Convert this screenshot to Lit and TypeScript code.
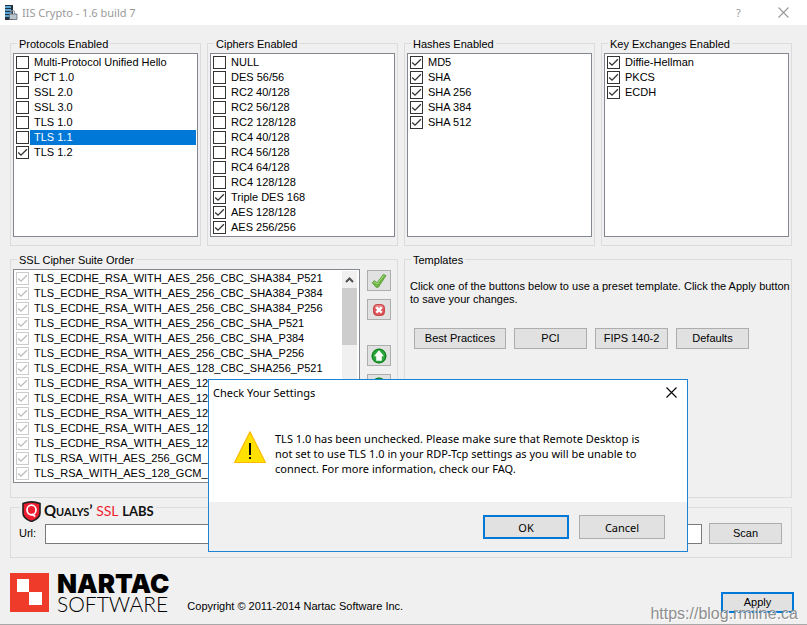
import { LitElement, html, css, svg } from 'lit';
import { customElement, property, state } from 'lit/decorators.js';
import { classMap } from 'lit/directives/class-map.js';

interface Item {
  label: string;
  checked: boolean;
  selected?: boolean;
}

const items = (labels: string[], checked: boolean): Item[] =>
  labels.map((label) => ({ label, checked }));

const PROTOCOLS: Item[] = [
  ...items(['Multi-Protocol Unified Hello', 'PCT 1.0', 'SSL 2.0', 'SSL 3.0', 'TLS 1.0'], false),
  { label: 'TLS 1.1', checked: false, selected: true },
  { label: 'TLS 1.2', checked: true },
];

const CIPHERS: Item[] = [
  ...items(
    [
      'NULL',
      'DES 56/56',
      'RC2 40/128',
      'RC2 56/128',
      'RC2 128/128',
      'RC4 40/128',
      'RC4 56/128',
      'RC4 64/128',
      'RC4 128/128',
    ],
    false,
  ),
  ...items(['Triple DES 168', 'AES 128/128', 'AES 256/256'], true),
];

const HASHES = items(['MD5', 'SHA', 'SHA 256', 'SHA 384', 'SHA 512'], true);
const KEY_EXCHANGES = items(['Diffie-Hellman', 'PKCS', 'ECDH'], true);

const SUITES = items(
  [
    'TLS_ECDHE_RSA_WITH_AES_256_CBC_SHA384_P521',
    'TLS_ECDHE_RSA_WITH_AES_256_CBC_SHA384_P384',
    'TLS_ECDHE_RSA_WITH_AES_256_CBC_SHA384_P256',
    'TLS_ECDHE_RSA_WITH_AES_256_CBC_SHA_P521',
    'TLS_ECDHE_RSA_WITH_AES_256_CBC_SHA_P384',
    'TLS_ECDHE_RSA_WITH_AES_256_CBC_SHA_P256',
    'TLS_ECDHE_RSA_WITH_AES_128_CBC_SHA256_P521',
    'TLS_ECDHE_RSA_WITH_AES_128_CBC_SHA256_P384',
    'TLS_ECDHE_RSA_WITH_AES_128_CBC_SHA256_P256',
    'TLS_ECDHE_RSA_WITH_AES_128_CBC_SHA_P521',
    'TLS_ECDHE_RSA_WITH_AES_128_CBC_SHA_P384',
    'TLS_ECDHE_RSA_WITH_AES_128_CBC_SHA_P256',
    'TLS_RSA_WITH_AES_256_GCM_SHA384',
    'TLS_RSA_WITH_AES_128_GCM_SHA256',
  ],
  true,
);

const TEMPLATES = ['Best Practices', 'PCI', 'FIPS 140-2', 'Defaults'];

const buttonStyles = css`
  button {
    box-sizing: border-box;
    height: 21px;
    min-width: 73px;
    padding: 0 4px;
    border: 1px solid #adadad;
    border-radius: 0;
    background: #e1e1e1;
    color: #000;
    font: inherit;
    white-space: nowrap;
  }
  button.default {
    border: 2px solid #0078d7;
  }
`;

@customElement('check-list')
export class CheckList extends LitElement {
  @property({ attribute: false }) items: Item[] = [];
  @property({ type: Boolean }) disabled = false;

  static styles = css`
    :host {
      display: block;
      min-width: 0;
    }
    ul {
      margin: 0;
      padding: 1px;
      list-style: none;
    }
    label {
      display: flex;
      height: 15px;
      line-height: 15px;
    }
    .box {
      display: grid;
      flex: none;
      width: 13px;
      height: 13px;
      margin: 1px;
      color: #333;
    }
    .box > * {
      grid-area: 1 / 1;
    }
    input {
      appearance: none;
      box-sizing: border-box;
      width: 13px;
      height: 13px;
      margin: 0;
      border: 1px solid #333;
      border-radius: 0;
      background: #fff;
    }
    input:disabled {
      border-color: #ccc;
    }
    .box.off {
      color: #bbb;
    }
    svg {
      pointer-events: none;
      visibility: hidden;
    }
    input:checked + svg {
      visibility: visible;
    }
    .text {
      flex: 1;
      min-width: 0;
      padding-left: 4px;
      white-space: nowrap;
      overflow: hidden;
    }
    .selected {
      background: #0078d7;
      color: #fff;
    }
  `;

  render() {
    return html`<ul>
      ${this.items.map(
        (item) => html`<li>
          <label>
            <span class=${classMap({ box: true, off: this.disabled })}>
              <input type="checkbox" .checked=${item.checked} ?disabled=${this.disabled} />
              <svg width="13" height="13" viewBox="0 0 13 13" aria-hidden="true">
                <path d="M2.2 6.5 5 9.2 10.9 3.3" fill="none" stroke="currentColor" stroke-width="1.3" />
              </svg>
            </span>
            <span class=${classMap({ text: true, selected: !!item.selected })}>${item.label}</span>
          </label>
        </li>`,
      )}
    </ul>`;
  }
}

@customElement('message-dialog')
export class MessageDialog extends LitElement {
  static styles = [
    buttonStyles,
    css`
      :host {
        display: block;
        box-sizing: border-box;
        border: 1px solid #1883d7;
        background: #fff;
        font: 11px/15px 'Noto Sans', 'Open Sans', sans-serif;
      }
      header {
        display: flex;
        justify-content: space-between;
        align-items: center;
        height: 25px;
        padding: 0 9px 0 4px;
      }
      h2 {
        margin: 0;
        font: inherit;
      }
      button.close {
        display: grid;
        min-width: 0;
        height: 13px;
        padding: 0;
        border: 0;
        background: none;
      }
      .body {
        display: flex;
        gap: 9px;
        padding: 26px 25px;
      }
      .body svg {
        flex: none;
      }
      p {
        margin: 0;
        white-space: nowrap;
      }
      footer {
        display: flex;
        justify-content: flex-end;
        gap: 10px;
        padding: 13px 22px 12px;
        background: #f0f0f0;
      }
      footer button {
        width: 86px;
        height: 24px;
      }
    `,
  ];

  render() {
    return html`
      <header>
        <h2>Check Your Settings</h2>
        <button class="close" aria-label="Close">
          <svg width="13" height="13" viewBox="0 0 13 13">
            <path d="M1.5 1.5 11.5 11.5M11.5 1.5 1.5 11.5" stroke="#000" stroke-width="1.1" />
          </svg>
        </button>
      </header>
      <div class="body">
        <svg width="32" height="32" viewBox="0 0 32 32" aria-hidden="true">
          <path d="M16 .8 31.4 31.5H.6Z" fill="#ffe100" stroke="#fdb900" stroke-width="1.2" stroke-linejoin="round" />
          <path d="M15 12h2v12h-2zM15 26h2v2h-2z" fill="#000" />
        </svg>
        <p>
          TLS 1.0 has been unchecked. Please make sure that Remote Desktop is<br />
          not set to use TLS 1.0 in your RDP-Tcp settings as you will be unable to<br />
          connect. For more information, check our FAQ.
        </p>
      </div>
      <footer>
        <button class="default">OK</button>
        <button>Cancel</button>
      </footer>
    `;
  }
}

const upArrow = svg`
  <circle cx="8" cy="8" r="7.5" fill="#2ca53a" />
  <circle cx="8" cy="8" r="6.8" fill="none" stroke="#0c7d1c" />
  <path d="M8 2.2 13 8.2h-2.2v4.600H5.200V8.2H3Z" fill="#fff" />`;

const TOOL_ICONS = [
  {
    name: 'Enable all',
    gap: false,
    art: svg`<path d="M1.200 9.800 3.400 7.600 6 9.800 12.400 1.400 15 2.600 7.400 14.200 5.400 14.600Z" fill="#6db544" stroke="#57993a" stroke-width=".8" />
      <path d="M2.600 9.800 3.500 8.800 6 11 13 2.400" fill="none" stroke="#a8dc7c" stroke-width="1" />`,
  },
  {
    name: 'Disable all',
    gap: false,
    art: svg`<rect x="2.500" y="2.500" width="11" height="11" rx="3.500" fill="#dd5558" stroke="#c23338" stroke-width=".8" />
      <path d="M3.500 6q0-2.500 2.500-2.800h4q2.500.3 2.500 2.800-4.500 2-9 0Z" fill="#f2a0a0" opacity=".7" />
      <path d="M5.300 5.300l5.400 5.400M10.700 5.300l-5.400 5.400" stroke="#fff" stroke-width="2.400" />`,
  },
  { name: 'Move up', gap: true, art: upArrow },
  {
    name: 'Move down',
    gap: false,
    art: svg`<g transform="rotate(180 8 8)">${upArrow}</g>`,
  },
];

@customElement('app-root')
export class AppRoot extends LitElement {
  @state() private url = '';

  static styles = [
    buttonStyles,
    css`
      :host {
        position: relative;
        display: flex;
        flex-direction: column;
        box-sizing: border-box;
        min-height: 100vh;
        border-bottom: 1px solid #a8a8a8;
        background: #f0f0f0;
        color: #000;
        font: 11px/13px 'Liberation Sans', Arial, sans-serif;
      }
      .titlebar {
        display: flex;
        align-items: center;
        gap: 4px;
        height: 25px;
        padding: 0 16px 0 4px;
        background: #fff;
        color: #999;
        font: 11px/16px 'Noto Sans', 'Open Sans', sans-serif;
      }
      h1 {
        flex: 1;
        margin: 0;
        font: inherit;
      }
      .titlebar button {
        display: grid;
        place-items: center;
        min-width: 0;
        width: 15px;
        padding: 0;
        border: 0;
        background: none;
        color: inherit;
      }
      .titlebar button + button {
        margin-left: 26px;
      }
      main {
        display: grid;
        grid-template-columns: repeat(4, minmax(0, 1fr));
        gap: 7px 6px;
        padding: 12px 15px 0 10px;
      }
      .wide {
        grid-column: span 2;
      }
      .full {
        grid-column: 1 / -1;
      }
      fieldset {
        min-width: 0;
        margin: 0;
        padding: 3px 2px 8px;
        border: 1px solid #dcdcdc;
      }
      legend {
        height: 13px;
        margin-left: 4px;
        padding: 0 2px;
        line-height: 15px;
      }
      .list {
        box-sizing: border-box;
        border: 1px solid #828790;
        background: #fff;
      }
      .short {
        min-height: 184px;
      }
      .suites {
        display: flex;
        gap: 7px;
        padding-right: 4px;
        padding-bottom: 6px;
      }
      .suites .list {
        display: flex;
        flex: 1;
        min-width: 0;
        padding-right: 2px;
      }
      check-list {
        flex: 1;
      }
      .scrollbar {
        display: flex;
        flex-direction: column;
        width: 15px;
        margin: 1px 0;
        background: #f0f0f0;
      }
      .scrollbar svg {
        flex: none;
      }
      .thumb {
        height: 57px;
        background: #cdcdcd;
      }
      .tools {
        display: flex;
        flex-direction: column;
        gap: 8px;
        padding-top: 1px;
      }
      .tools button {
        display: grid;
        place-items: center;
        min-width: 0;
        width: 24px;
        padding: 0;
      }
      .tools .spaced {
        margin-top: 17px;
      }
      .templates {
        padding: 14px 5px;
      }
      .templates legend {
        margin-left: 1px;
      }
      .templates p {
        margin: 0 0 22px;
        white-space: nowrap;
      }
      .choices {
        display: grid;
        grid-template-columns: 92px 73px 73px 73px;
        gap: 8px;
        padding-left: 4px;
      }
      .labs {
        margin-top: -4px;
        padding: 9px 9px 13px 8px;
      }
      .labs legend {
        margin-left: 1px;
      }
      .labs-brand {
        display: flex;
        align-items: flex-start;
        gap: 3px;
        font: 700 15px/19px Lato, sans-serif;
        font-variant-caps: small-caps;
        color: #111;
      }
      .labs-brand svg {
        flex: none;
      }
      .labs-brand b {
        color: #ee1c2e;
        font-variant-caps: normal;
        font-size: 14px;
        font-weight: 400;
      }
      .labs-brand i {
        font-style: normal;
        font-variant-caps: normal;
        font-size: 13px;
      }
      .url {
        display: flex;
        align-items: center;
        gap: 7px;
      }
      .url label {
        width: 19px;
      }
      .url input {
        box-sizing: border-box;
        flex: 1;
        min-width: 0;
        height: 20px;
        padding: 0 4px;
        border: 1px solid #7a7a7a;
        border-radius: 0;
        background: #fff;
        font: inherit;
      }
      .bottom {
        display: flex;
        align-items: flex-end;
        gap: 18px;
        padding: 15px 13px 0 10px;
      }
      .brand {
        display: flex;
        gap: 8px;
        white-space: nowrap;
      }
      .brand strong,
      .brand span {
        display: block;
        height: 20px;
        font: 900 26px/22px Inter, sans-serif;
      }
      .brand span {
        font: 300 21px/22px Lato, sans-serif;
      }
      .bottom p {
        flex: 1;
        margin: 0;
      }
      message-dialog {
        position: absolute;
        top: 379px;
        left: 208px;
        width: 480px;
        height: 173px;
      }
      .watermark {
        position: absolute;
        right: 9px;
        bottom: 0;
        color: #8e8e8e;
        font-size: 16px;
        line-height: 20px;
        text-decoration: none;
        text-shadow: 1px 1px 0 #fff;
      }
    `,
  ];

  private group(title: string, list: Item[]) {
    return html`<fieldset>
      <legend>${title}</legend>
      <div class="list short"><check-list .items=${list}></check-list></div>
    </fieldset>`;
  }

  render() {
    return html`
      <header class="titlebar">
        <svg width="14" height="17" viewBox="0 0 14 17" aria-hidden="true">
          <path d="M1 1h8v15H1z" fill="#27313b" />
          <path d="M1 2h6v2H1zM1 5h6v2H1zM1 8h6v2H1zM1 11h5v2H1z" fill="#5aa5d6" />
          <path d="M7 10V8.500q0-2 1.800-2t1.800 2V10" fill="none" stroke="#8d9aa5" stroke-width="1.200" />
          <path d="M5.500 10h7.500v5.500H5.500z" fill="#b9c4cd" stroke="#5d6a75" stroke-width=".8" />
        </svg>
        <h1>IIS Crypto - 1.6 build 7</h1>
        <button aria-label="Help">?</button>
        <button aria-label="Close window">
          <svg width="11" height="11" viewBox="0 0 11 11">
            <path d="M.5.5l10 10M10.500.500l-10 10" stroke="currentColor" stroke-width="1.1" />
          </svg>
        </button>
      </header>
      <main>
        ${this.group('Protocols Enabled', PROTOCOLS)} ${this.group('Ciphers Enabled', CIPHERS)}
        ${this.group('Hashes Enabled', HASHES)} ${this.group('Key Exchanges Enabled', KEY_EXCHANGES)}
        <fieldset class="wide">
          <legend>SSL Cipher Suite Order</legend>
          <div class="suites">
            <div class="list">
              <check-list .items=${SUITES} disabled></check-list>
              <div class="scrollbar">
                <svg width="15" height="17" viewBox="0 0 15 17">
                  <path d="M4 11 7.500 7.500 11 11" fill="none" stroke="#505050" stroke-width="2" />
                </svg>
                <div class="thumb"></div>
              </div>
            </div>
            <div class="tools">
              ${TOOL_ICONS.map(
                (tool) => html`<button class=${classMap({ spaced: tool.gap })} aria-label=${tool.name}>
                  <svg width="16" height="16" viewBox="0 0 16 16">${tool.art}</svg>
                </button>`,
              )}
            </div>
          </div>
        </fieldset>
        <fieldset class="wide templates">
          <legend>Templates</legend>
          <p>
            Click one of the buttons below to use a preset template. Click the Apply button<br />
            to save your changes.
          </p>
          <div class="choices">${TEMPLATES.map((name) => html`<button>${name}</button>`)}</div>
        </fieldset>
        <fieldset class="full labs">
          <legend>
            <span class="labs-brand">
              <svg width="19" height="21" viewBox="0 0 19 21" aria-hidden="true">
                <path d="M1 2.500Q9.500-.8 18 2.500V12q0 5.500-8.500 8.500Q1 17.500 1 12Z" fill="#ed1c2e" stroke="#222" stroke-width="1.600" />
                <ellipse cx="9.500" cy="9" rx="4.500" ry="4.900" fill="none" stroke="#fff" stroke-width="1.700" />
                <path d="M9.500 12.800 13.200 15.500" stroke="#fff" stroke-width="1.600" />
              </svg>
              <span>Qualys’ <b>SSL</b> <i>LABS</i></span>
            </span>
          </legend>
          <div class="url">
            <label for="url">Url:</label>
            <input
              id="url"
              type="text"
              .value=${this.url}
              @input=${(e: Event) => (this.url = (e.target as HTMLInputElement).value)}
            />
            <button>Scan</button>
          </div>
        </fieldset>
      </main>
      <footer class="bottom">
        <div class="brand">
          <svg width="39" height="39" viewBox="0 0 39 39" aria-hidden="true">
            <path d="M0 0h39v39H0z" fill="#ef3b2a" />
            <path d="M7 6h12v13H7zM19 19h13v13H19z" fill="#fff" />
          </svg>
          <div><strong>NARTAC</strong><span>SOFTWARE</span></div>
        </div>
        <p>Copyright © 2011-2014 Nartac Software Inc.</p>
        <button class="default">Apply</button>
      </footer>
      <message-dialog role="dialog" aria-label="Check Your Settings"></message-dialog>
      <a class="watermark" href="https://blog.rmilne.ca">https://blog.rmilne.ca</a>
    `;
  }
}
